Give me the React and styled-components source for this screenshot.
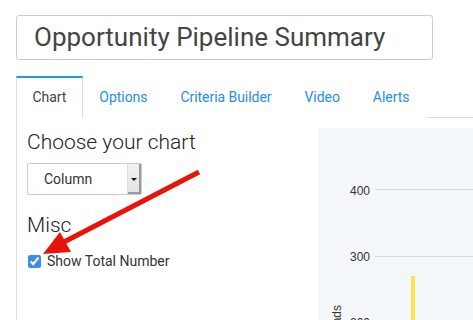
import React from "react";
import styled, { createGlobalStyle } from "styled-components";

const Global = createGlobalStyle`
  body {
    margin: 0;
    background: #fff;
    font-family: Roboto, "Liberation Sans", sans-serif;
    color: #333;
  }
  #root { height: 320px; overflow: hidden; }
`

const Page = styled.div`
  position: relative;
  padding: 15px 0 0 16px;
  height: 305px;
  display: flex;
  flex-direction: column;
`
const TitleInput = styled.div`
  box-sizing: border-box;
  width: 417px;
  height: 45px;
  border: 1px solid #ccc;
  border-radius: 3px;
  padding-left: 17px;
  font-size: 26px;
  line-height: 43px;
  color: #444;
`
const TabBar = styled.div`
  margin-top: 16px;
  display: flex;
  border-bottom: 1px solid #ddd;
`
const Tab = styled.div`
  padding: 0 15.5px 1px;
  height: 39px;
  line-height: 39px;
  font-size: 14px;
  letter-spacing: -0.05px;
  border: 1px solid ${p => (p.active ? "#ddd" : "transparent")};
  border-top: 2px solid ${p => (p.active ? "#2196f3" : "transparent")};
  border-bottom: none;
  margin-bottom: -1px;
  background: #fff;
  color: ${p => (p.active ? "#444" : "#2a8ce6")};
`
const Panel = styled.div`
  flex: 1;
  display: grid;
  grid-template-columns: 301px 1fr;
  border-left: 1px solid #ddd;
  padding-top: 10px;
`
const Left = styled.div`
  padding-left: 10px;
`
const Heading = styled.div`
  font-size: 21px;
  font-weight: 300;
  line-height: 24px;
  color: #222;
  margin-top: ${p => p.top}px;
`
const Select = styled.div`
  box-sizing: border-box;
  margin-top: 9px;
  width: 115px;
  height: 32px;
  border: 1px solid #ccc;
  border-radius: 2px;
  display: flex;
  background: #fff;
`
const SelectText = styled.div`
  flex: 1;
  padding-left: 16px;
  font-size: 14px;
  line-height: 30px;
  color: #333;
`
const SelectButton = styled.div`
  width: 13px;
  background: linear-gradient(#f2f2f2, #e2e2e2);
  border-left: 1px solid #ddd;
  box-shadow: inset -2px -2px 0 #999;
  display: flex;
  align-items: center;
  justify-content: center;
  &::after {
    content: "";
    border-left: 3px solid transparent;
    border-right: 3px solid transparent;
    border-top: 3px solid #111;
    margin-right: 2px;
  }
`
const CheckRow = styled.label`
  margin-top: 14px;
  display: flex;
  align-items: center;
  gap: 6px;
  font-size: 14px;
  line-height: 20px;
  color: #333;
`
const Check = styled.input`
  margin: 0 0 0 1px;
  width: 13px;
  height: 13px;
  accent-color: #3b8ee8;
`
const ChartArea = styled.div`
  background: #f4f7fa;
  overflow: hidden;
`
const Overlay = styled.svg`
  position: absolute;
  left: 0;
  top: 0;
  pointer-events: none;
`

const tabs = ["Chart", "Options", "Criteria Builder", "Video", "Alerts"];

const Chart = () => (
  <svg width="155" height="192" style={{ display: "block" }}>
    <g fontFamily="'Liberation Sans', Arial, sans-serif" fontSize="12" fill="#333">
      <line x1="57" y1="61.5" x2="155" y2="61.5" stroke="#d8d8d8" />
      <text x="52" y="67" textAnchor="end">400</text>
      <line x1="57" y1="128.5" x2="155" y2="128.5" stroke="#d8d8d8" />
      <text x="52" y="133" textAnchor="end">300</text>
      <text x="52" y="199" textAnchor="end">200</text>
      <text transform="translate(23 177) rotate(-90)" textAnchor="end">Leads</text>
    </g>
    <rect x="93" y="148" width="4" height="60" fill="#fde24a" />
  </svg>
);

const App = () => (
  <Page>
    <Global />
    <TitleInput>Opportunity Pipeline Summary</TitleInput>
    <TabBar>
      {tabs.map((t, i) => (
        <Tab key={t} active={i === 0}>{t}</Tab>
      ))}
    </TabBar>
    <Panel>
      <Left>
        <Heading top={2}>Choose your chart</Heading>
        <Select>
          <SelectText>Column</SelectText>
          <SelectButton />
        </Select>
        <Heading top={18}>Misc</Heading>
        <CheckRow>
          <Check type="checkbox" defaultChecked />
          Show Total Number
        </CheckRow>
      </Left>
      <ChartArea>
        <Chart />
      </ChartArea>
    </Panel>
    <Overlay width="473" height="320">
      <line x1="199" y1="172" x2="63" y2="242.5" stroke="#e8140c" strokeWidth="5" />
      <polygon points="43,254 60,232 71,252" fill="#e8140c" />
    </Overlay>
  </Page>
);

export default App;
